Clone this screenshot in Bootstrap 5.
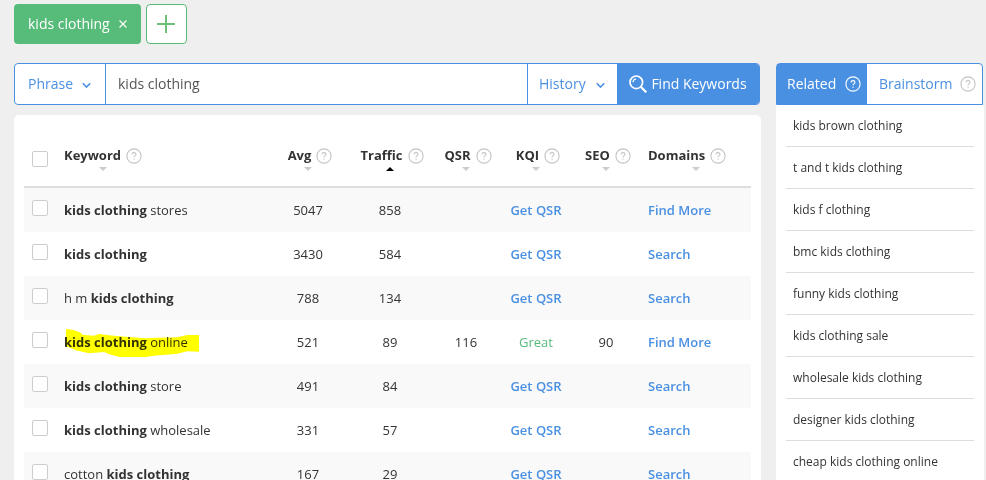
<!DOCTYPE html>
<html lang="en">
<head>
<meta charset="utf-8">
<meta name="viewport" content="width=device-width, initial-scale=1">
<title>Keyword research</title>
<link href="https://cdn.jsdelivr.net/npm/bootstrap@5.3.0/dist/css/bootstrap.min.css" rel="stylesheet">
<style>
body { background: #efefef; color: #333; font: 13px/20px "Open Sans", sans-serif; }
a { text-decoration: none; color: #4a90e2; }
.app { height: 100vh; overflow: hidden; gap: 15px; padding: 4px 2px 0 14px; }
.side { width: 208px; flex: none; padding-top: 59px; }
.tabs-row { gap: 5px; height: 40px; margin-bottom: 19px; font-size: 14px; }
.phrase-tab { background: #57bb7a; border-radius: 4px; color: #fff; padding: 0 14px; gap: 9px; }
.plain { background: none; border: 0; padding: 0; color: inherit; display: inline-flex; align-items: center; }
.add { width: 41px; background: #fff; border: 1px solid #57bb7a; border-radius: 4px; padding: 0; }
.search { height: 42px; font-size: 14px; border: 1px solid #4a90e2; border-radius: 4px; background: #fff; overflow: hidden; margin: 0 1px 10px 0; }
.pick { position: relative; color: #4a90e2; flex: none; }
.pick select { appearance: none; border: 0; background: none; color: inherit; height: 100%; width: 100%; padding: 0 12px 0 13px; outline: 0; }
.pick svg { position: absolute; right: 14px; top: 18px; pointer-events: none; }
.pick-phrase { width: 91px; border-right: 1px solid #4a90e2; }
.pick-history { width: 90px; border-left: 1px solid #4a90e2; }
.pick-history select { padding-left: 11px; }
.pick-history svg { right: 12px; }
.query { border: 0; color: #555; padding: 0 12px; min-width: 0; outline: 0; }
.find { width: 142px; flex: none; border: 0; background: #4a90e2; color: #fff; gap: 4px; padding: 0; }
.panel { background: #fff; border-radius: 5px; padding: 0 10px; min-height: 400px; }
.kw { width: 100%; table-layout: fixed; border-collapse: separate; border-spacing: 0; }
.kw th { height: 73px; padding: 29px 0 0; border-bottom: 2px solid #ddd; vertical-align: top; font-weight: 700; text-align: center; white-space: nowrap; }
.kw td { height: 44px; padding: 0; vertical-align: middle; text-align: center; }
.kw tbody tr:nth-child(odd) { background: #f9f9f9; }
.kw b { font-weight: 700; }
.kw td a { font-weight: 600; }
.kw .start { text-align: left; padding-left: 8px; }
.kw .dom { text-align: left; padding-left: 12px; }
.kw .great { color: #57bb7a; }
.w-check { width: 32px; } .w-avg { width: 72px; } .w-traffic { width: 92px; }
.w-narrow { width: 60px; } .w-kqi { width: 80px; } .w-dom { width: 115px; }
.head { display: inline-flex; flex-direction: column; align-items: center; line-height: 23px; }
.head-line { display: flex; align-items: center; gap: 5px; }
.kw th:not(.start):not(.dom) .head-line { padding-left: 4px; }
.kw th.dom { padding-right: 8px; }
.dom .head { display: flex; }
.dom .head-line { align-self: flex-start; }
.arrow { width: 0; height: 0; border: 4px solid transparent; border-top-color: #ccc; border-bottom: 0; }
.arrow.up { border-top: 0; border-bottom: 4px solid #000; }
.kw .sort { background: none; border: 0; padding: 0; font-weight: inherit; color: inherit; }
.box { appearance: none; display: block; width: 16px; height: 16px; margin: 0 0 4px 8px; border: 1px solid #ccc; border-radius: 2px; background: #fff; }
.box:checked { background: #4a90e2; }
.kw th .box { margin-top: 7px; }
.marked { position: relative; }
.marked svg { position: absolute; left: 0; top: -5px; mix-blend-mode: multiply; }
.q { color: #c4c4c4; flex: none; }
.switch { height: 42px; font-size: 14px; border: 1px solid #4a90e2; border-radius: 4px 4px 0 0; background: #fff; margin-right: 1px; }
.switch button { border: 0; background: none; color: #4a90e2; padding: 0; display: flex; align-items: center; justify-content: space-between; }
.switch .on { background: #4a90e2; color: #fff; width: 90px; padding: 0 6px 0 10px; }
.switch .on .q { color: #fff; }
.switch .off { flex: 1; padding: 0 6px 0 12px; }
.ideas { background: #fff; padding: 0 10px; min-height: 400px; }
.ideas a { display: block; height: 42px; border-bottom: 1px solid #ddd; padding: 11px 7px 0; color: #333; font-size: 12px; }
</style>
<script src="https://cdn.jsdelivr.net/npm/bootstrap@5.3.0/dist/js/bootstrap.bundle.min.js"></script>
</head>
<body>
<svg class="d-none">
  <symbol id="help" viewBox="0 0 16 16"><circle cx="8" cy="8" r="7.1" fill="none" stroke="currentColor" stroke-width="1.1"/><path d="M6 6.4C6 5.2 6.8 4.6 8 4.6s2 .7 2 1.7C10 7.6 8 7.7 8 9.3M8 10.6v1.2" fill="none" stroke="currentColor" stroke-width="1.1"/></symbol>
  <symbol id="chev" viewBox="0 0 9 7"><path d="M.8 1.3l3.7 3.8 3.7-3.8" fill="none" stroke="currentColor" stroke-width="1.6"/></symbol>
</svg>
<div class="app d-flex">
  <main class="flex-grow-1">
    <div class="tabs-row d-flex">
      <div class="phrase-tab d-flex align-items-center"><span>kids clothing</span>
        <button class="plain" aria-label="Close"><svg width="8" height="8" viewBox="0 0 8 8"><path d="M.5.5l7 7M7.5.5l-7 7" stroke="#fff" stroke-width="1.1"/></svg></button>
      </div>
      <button class="add d-flex align-items-center justify-content-center" aria-label="Add"><svg width="18" height="18" viewBox="0 0 18 18"><path d="M0 9h18M9 0v18" stroke="#6fc077" stroke-width="2"/></svg></button>
    </div>
    <form class="search d-flex" onsubmit="return false">
      <div class="pick pick-phrase"><select aria-label="Match type"><option>Phrase</option></select><svg width="9" height="7"><use href="#chev"/></svg></div>
      <input class="query flex-grow-1" type="text" value="kids clothing" aria-label="Keyword">
      <div class="pick pick-history"><select aria-label="History"><option>History</option></select><svg width="9" height="7"><use href="#chev"/></svg></div>
      <button class="find d-flex align-items-center justify-content-center"><svg width="18" height="18" viewBox="0 0 18 18" fill="none" stroke="#fff"><circle cx="7.3" cy="7.3" r="6.3" stroke-width="1.7"/><path d="M12 12l5.3 5.3" stroke-width="2.2"/><path d="M4 7.2A3.4 3.4 0 0 1 7.2 4" stroke-width="1.2"/></svg>Find Keywords</button>
    </form>
    <section class="panel">
      <table class="kw">
        <colgroup><col class="w-check"><col><col class="w-avg"><col class="w-traffic"><col class="w-narrow"><col class="w-kqi"><col class="w-narrow"><col class="w-dom"></colgroup>
        <thead><tr>
          <th><input class="box" type="checkbox" aria-label="Select all"></th>
          <th class="start"><span class="head"><span class="head-line"><button class="sort">Keyword</button><svg class="q" width="16" height="16"><use href="#help"/></svg></span><i class="arrow"></i></span></th>
          <th><span class="head"><span class="head-line"><button class="sort">Avg</button><svg class="q" width="16" height="16"><use href="#help"/></svg></span><i class="arrow"></i></span></th>
          <th><span class="head"><span class="head-line"><button class="sort">Traffic</button><svg class="q" width="16" height="16"><use href="#help"/></svg></span><i class="arrow up"></i></span></th>
          <th><span class="head"><span class="head-line"><button class="sort">QSR</button><svg class="q" width="16" height="16"><use href="#help"/></svg></span><i class="arrow"></i></span></th>
          <th><span class="head"><span class="head-line"><button class="sort">KQI</button><svg class="q" width="16" height="16"><use href="#help"/></svg></span><i class="arrow"></i></span></th>
          <th><span class="head"><span class="head-line"><button class="sort">SEO</button><svg class="q" width="16" height="16"><use href="#help"/></svg></span><i class="arrow"></i></span></th>
          <th class="dom"><span class="head"><span class="head-line"><button class="sort">Domains</button><svg class="q" width="16" height="16"><use href="#help"/></svg></span><i class="arrow"></i></span></th>
        </tr></thead>
        <tbody>
          <tr><td><input class="box" type="checkbox" aria-label="kids clothing stores"></td><td class="start"><b>kids clothing</b> stores</td><td>5047</td><td>858</td><td></td><td><a href="#">Get QSR</a></td><td></td><td class="dom"><a href="#">Find More</a></td></tr>
          <tr><td><input class="box" type="checkbox" aria-label="kids clothing"></td><td class="start"><b>kids clothing</b></td><td>3430</td><td>584</td><td></td><td><a href="#">Get QSR</a></td><td></td><td class="dom"><a href="#">Search</a></td></tr>
          <tr><td><input class="box" type="checkbox" aria-label="h m kids clothing"></td><td class="start">h m <b>kids clothing</b></td><td>788</td><td>134</td><td></td><td><a href="#">Get QSR</a></td><td></td><td class="dom"><a href="#">Search</a></td></tr>
          <tr><td><input class="box" type="checkbox" aria-label="kids clothing online"></td><td class="start"><span class="marked"><b>kids clothing</b> online<svg width="136" height="30" viewBox="150 54 408 90"><path fill="#ff0" d="M156 57l20 2 24 9 5 6 35 3 15-5 45 5 45 4 50 4 15-1 80-2 30-7h35v50l-35-1-30 7-70 6-25 4h-79l-30-8-16-7-45 4-40-9-30-13z"/></svg></span></td><td>521</td><td>89</td><td>116</td><td class="great">Great</td><td>90</td><td class="dom"><a href="#">Find More</a></td></tr>
          <tr><td><input class="box" type="checkbox" aria-label="kids clothing store"></td><td class="start"><b>kids clothing</b> store</td><td>491</td><td>84</td><td></td><td><a href="#">Get QSR</a></td><td></td><td class="dom"><a href="#">Search</a></td></tr>
          <tr><td><input class="box" type="checkbox" aria-label="kids clothing wholesale"></td><td class="start"><b>kids clothing</b> wholesale</td><td>331</td><td>57</td><td></td><td><a href="#">Get QSR</a></td><td></td><td class="dom"><a href="#">Search</a></td></tr>
          <tr><td><input class="box" type="checkbox" aria-label="cotton kids clothing"></td><td class="start">cotton <b>kids clothing</b></td><td>167</td><td>29</td><td></td><td><a href="#">Get QSR</a></td><td></td><td class="dom"><a href="#">Search</a></td></tr>
        </tbody>
      </table>
    </section>
  </main>
  <aside class="side">
    <div class="switch d-flex">
      <button class="on">Related<svg class="q" width="16" height="16"><use href="#help"/></svg></button>
      <button class="off">Brainstorm<svg class="q" width="16" height="16"><use href="#help"/></svg></button>
    </div>
    <nav class="ideas">
      <a href="#">kids brown clothing</a>
      <a href="#">t and t kids clothing</a>
      <a href="#">kids f clothing</a>
      <a href="#">bmc kids clothing</a>
      <a href="#">funny kids clothing</a>
      <a href="#">kids clothing sale</a>
      <a href="#">wholesale kids clothing</a>
      <a href="#">designer kids clothing</a>
      <a href="#">cheap kids clothing online</a>
    </nav>
  </aside>
</div>
</body>
</html>
